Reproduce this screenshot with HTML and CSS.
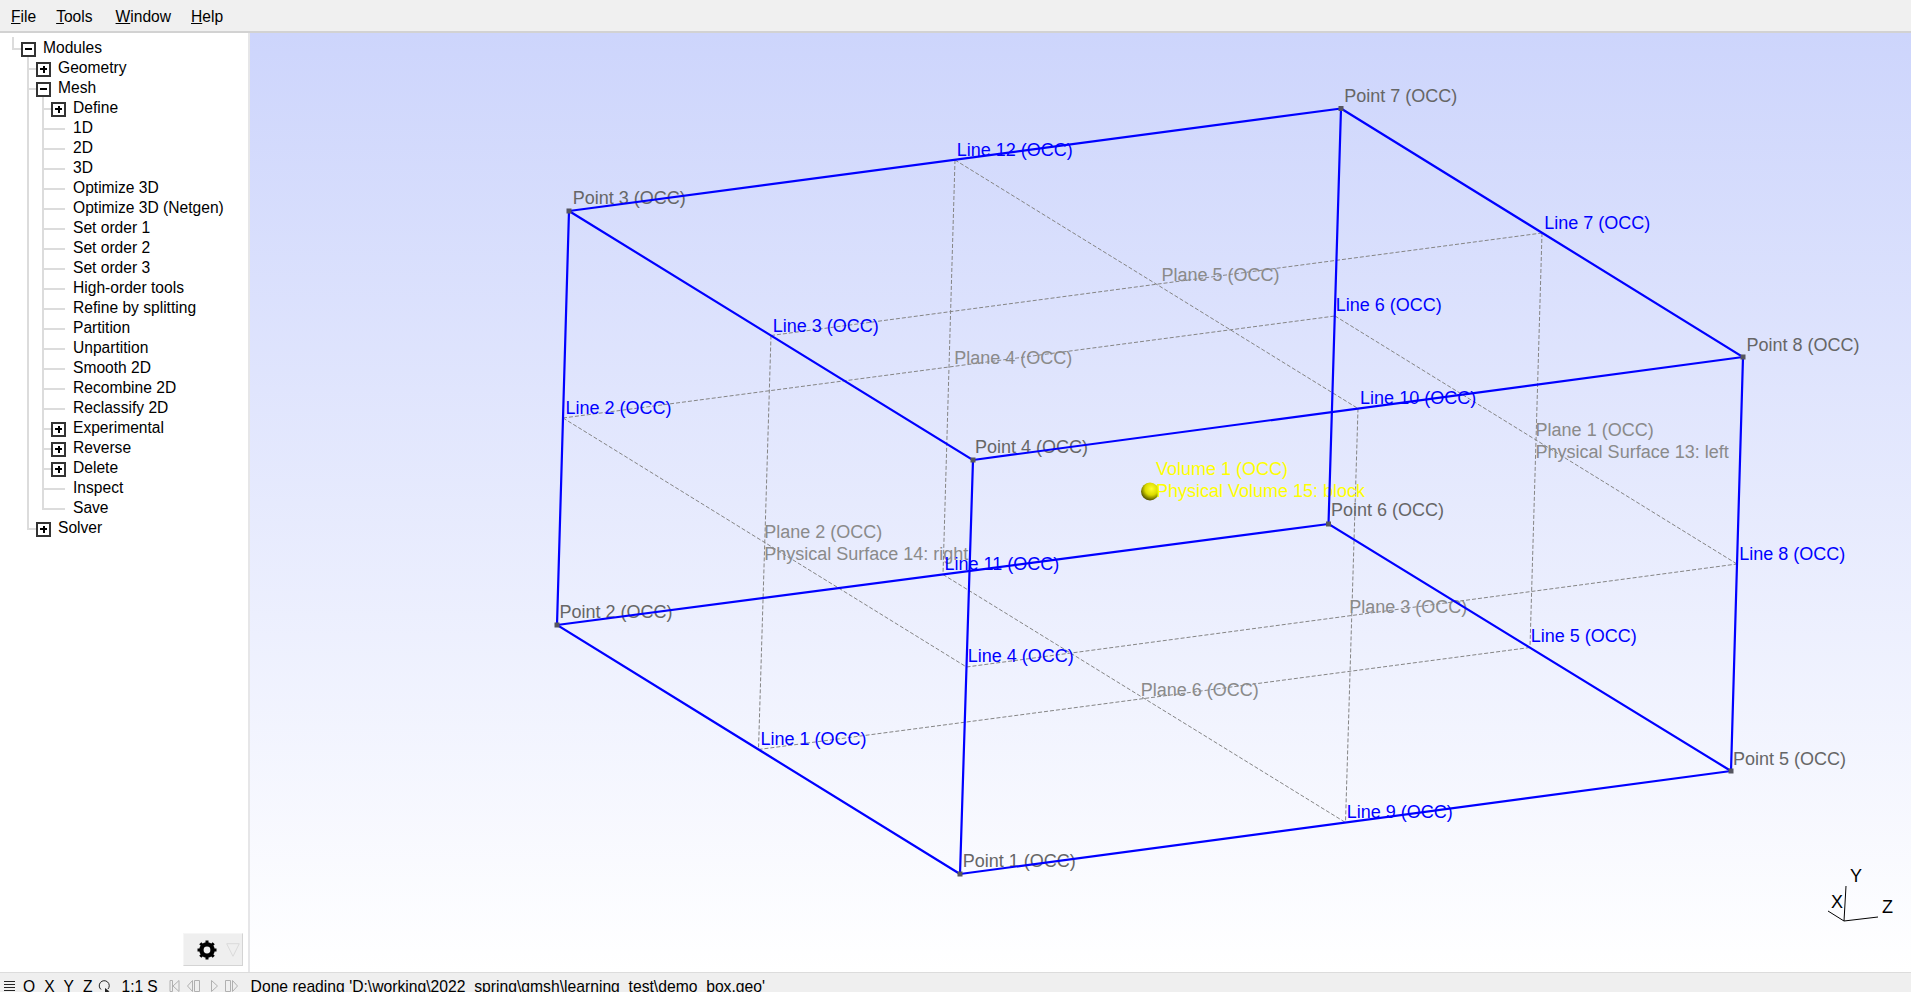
FILE: index.html
```html
<!DOCTYPE html>
<html lang="en">
<head>
<meta charset="utf-8">
<title>Gmsh</title>
<link rel="stylesheet" href="styles.css">
</head>
<body>
<header class="menubar">
  <span class="menu m-file"><u>F</u>ile</span>
  <span class="menu m-tools"><u>T</u>ools</span>
  <span class="menu m-window"><u>W</u>indow</span>
  <span class="menu m-help"><u>H</u>elp</span>
</header>
<div class="main">
  <aside class="sidebar">
    <ul class="tree root">
      <li><div class="row"><span class="box minus"></span><span>Modules</span></div>
        <ul class="tree">
          <li><div class="row"><span class="box plus"></span><span>Geometry</span></div></li>
          <li><div class="row"><span class="box minus"></span><span>Mesh</span></div>
            <ul class="tree">
              <li><div class="row"><span class="box plus"></span><span>Define</span></div></li>
              <li class="leaf"><div class="row">1D</div></li>
              <li class="leaf"><div class="row">2D</div></li>
              <li class="leaf"><div class="row">3D</div></li>
              <li class="leaf"><div class="row">Optimize 3D</div></li>
              <li class="leaf"><div class="row">Optimize 3D (Netgen)</div></li>
              <li class="leaf"><div class="row">Set order 1</div></li>
              <li class="leaf"><div class="row">Set order 2</div></li>
              <li class="leaf"><div class="row">Set order 3</div></li>
              <li class="leaf"><div class="row">High-order tools</div></li>
              <li class="leaf"><div class="row">Refine by splitting</div></li>
              <li class="leaf"><div class="row">Partition</div></li>
              <li class="leaf"><div class="row">Unpartition</div></li>
              <li class="leaf"><div class="row">Smooth 2D</div></li>
              <li class="leaf"><div class="row">Recombine 2D</div></li>
              <li class="leaf"><div class="row">Reclassify 2D</div></li>
              <li><div class="row"><span class="box plus"></span><span>Experimental</span></div></li>
              <li><div class="row"><span class="box plus"></span><span>Reverse</span></div></li>
              <li><div class="row"><span class="box plus"></span><span>Delete</span></div></li>
              <li class="leaf"><div class="row">Inspect</div></li>
              <li class="leaf"><div class="row">Save</div></li>
            </ul>
          </li>
          <li><div class="row"><span class="box plus"></span><span>Solver</span></div></li>
        </ul>
      </li>
    </ul>
    <div class="gearbtn">
      <svg class="gear" viewBox="0 0 20 20" width="20" height="20">
        <circle class="gear-ring" cx="10" cy="10" r="5.6"/>
        <path class="gear-teeth" d="M10 0.5V19.5M0.5 10H19.5M3.3 3.3L16.7 16.7M16.7 3.3L3.3 16.7"/>
        <circle class="gear-hole" cx="10" cy="10" r="3.4"/>
      </svg>
      <svg class="gear-arrow" viewBox="0 0 14 14" width="14" height="14"><path d="M0.7 0.7H13.3L7 13.3Z"/></svg>
    </div>
  </aside>
  <section class="canvas">
    <svg class="scene" viewBox="250 33 1661 939" preserveAspectRatio="none">
      <g class="dash">
        <path d="M771 335.5L1542 233"/>
        <path d="M955 160L1358 408.5"/>
        <path d="M563 418L1335 316"/>
        <path d="M955 160L943 574.5"/>
        <path d="M771 335.5L758.5 749.5"/>
        <path d="M563 418L966.5 667"/>
        <path d="M1335 316L1737 564"/>
        <path d="M1542 233L1530 647.5"/>
        <path d="M1358 408.5L1345.5 822.5"/>
        <path d="M966.5 667L1737 564"/>
        <path d="M758.5 749.5L1530 647.5"/>
        <path d="M943 574.5L1345.5 822.5"/>
      </g>
      <defs>
        <radialGradient id="ball" cx="0.58" cy="0.35" r="0.7">
          <stop offset="0" stop-color="#ffff30"/>
          <stop offset="0.5" stop-color="#dcdc00"/>
          <stop offset="1" stop-color="#3a3a00"/>
        </radialGradient>
      </defs>
      <circle cx="1150" cy="491.5" r="9" fill="url(#ball)"/>
      <g class="lbl-plane">
        <text x="1161.5" y="281">Plane 5 (OCC)</text>
        <text x="954.3" y="364">Plane 4 (OCC)</text>
        <text x="1535.6" y="436">Plane 1 (OCC)</text>
        <text x="1535.6" y="458">Physical Surface 13: left</text>
        <text x="764.2" y="538">Plane 2 (OCC)</text>
        <text x="764.2" y="560">Physical Surface 14: right</text>
        <text x="1349.2" y="613">Plane 3 (OCC)</text>
        <text x="1140.8" y="696">Plane 6 (OCC)</text>
      </g>
      <g class="lbl-point">
        <text x="1344.3" y="102">Point 7 (OCC)</text>
        <text x="572.8" y="203.5">Point 3 (OCC)</text>
        <text x="1746.5" y="350.7">Point 8 (OCC)</text>
        <text x="975" y="453">Point 4 (OCC)</text>
        <text x="1330.9" y="516.4">Point 6 (OCC)</text>
        <text x="559.4" y="618">Point 2 (OCC)</text>
        <text x="1733" y="765">Point 5 (OCC)</text>
        <text x="962.8" y="867.4">Point 1 (OCC)</text>
      </g>
      <g class="lbl-volume">
        <text x="1156" y="475">Volume 1 (OCC)</text>
        <text x="1156" y="497">Physical Volume 15: block</text>
      </g>
      <g class="lbl-line">
        <text x="956.7" y="155.7">Line 12 (OCC)</text>
        <text x="1544.2" y="228.8">Line 7 (OCC)</text>
        <text x="1335.8" y="310.7">Line 6 (OCC)</text>
        <text x="772.7" y="332.4">Line 3 (OCC)</text>
        <text x="1360.1" y="404.3">Line 10 (OCC)</text>
        <text x="565.5" y="414.1">Line 2 (OCC)</text>
        <text x="1739.2" y="560.3">Line 8 (OCC)</text>
        <text x="944.5" y="570">Line 11 (OCC)</text>
        <text x="1530.8" y="642.2">Line 5 (OCC)</text>
        <text x="967.7" y="661.7">Line 4 (OCC)</text>
        <text x="760.5" y="744.6">Line 1 (OCC)</text>
        <text x="1346.7" y="817.7">Line 9 (OCC)</text>
      </g>
      <g class="edge">
        <path d="M960 874L557 625L569 211L973 460Z"/>
        <path d="M1731 771L1328.5 524L1341 108.5L1743 357Z"/>
        <path d="M960 874L1731 771"/>
        <path d="M557 625L1328.5 524"/>
        <path d="M569 211L1341 108.5"/>
        <path d="M973 460L1743 357"/>
      </g>
      <g class="vertex">
        <rect x="957.500" y="871.500" width="5" height="5"/>
        <rect x="554.500" y="622.500" width="5" height="5"/>
        <rect x="566.500" y="208.500" width="5" height="5"/>
        <rect x="970.500" y="457.500" width="5" height="5"/>
        <rect x="1728.500" y="768.500" width="5" height="5"/>
        <rect x="1326" y="521.500" width="5" height="5"/>
        <rect x="1338.500" y="106" width="5" height="5"/>
        <rect x="1740.500" y="354.500" width="5" height="5"/>
      </g>
      <path class="axis" d="M1846 886L1844 921M1844 921L1828 911M1844 921L1878 917"/>
      <g class="lbl-axis">
        <text x="1850" y="882">Y</text>
        <text x="1831" y="908">X</text>
        <text x="1882" y="913">Z</text>
      </g>
    </svg>
  </section>
</div>
<footer class="status">
  <svg class="ic ic-menu" viewBox="0 0 11 12" width="11" height="12"><path d="M0 1.5H11M0 4.5H11M0 7.5H11M0 10.5H11"/></svg>
  <span class="st st-o">O</span>
  <span class="st st-x">X</span>
  <span class="st st-y">Y</span>
  <span class="st st-z">Z</span>
  <svg class="ic ic-rot" viewBox="0 0 13 14" width="13" height="14"><path d="M3 9.5A5 5 0 1 1 10 9"/><path class="solid" d="M7 8L11.500 11.500L7 13Z"/></svg>
  <span class="st st-one">1:1</span>
  <span class="st st-s">S</span>
  <svg class="ic ic-g i-first" viewBox="0 0 11 12" width="11" height="12"><path d="M1 .5H3.500V11.500H1ZM10 .5V11.500L4 6Z"/></svg>
  <svg class="ic ic-g i-prev" viewBox="0 0 13 12" width="13" height="12"><path d="M5.500 .5V11.500L.5 6ZM7.500 .5H12.500V11.500H7.500Z"/></svg>
  <svg class="ic ic-g i-play" viewBox="0 0 7 12" width="7" height="12"><path d="M.5 .5L6.500 6L.5 11.500Z"/></svg>
  <svg class="ic ic-g i-next" viewBox="0 0 13 12" width="13" height="12"><path d="M.5 .5H5.500V11.500H.5ZM7.500 .5V11.500L12.500 6Z"/></svg>
  <span class="st st-msg">Done reading 'D:\working\2022_spring\gmsh\learning_test\demo_box.geo'</span>
</footer>
</body>
</html>
```
FILE: styles.css
```css
* { box-sizing: border-box; }
html, body { margin: 0; height: 992px; overflow: hidden; }
body {
  display: flex;
  flex-direction: column;
  width: 1911px;
  font-family: "Liberation Sans", Arial, sans-serif;
  font-size: 15.6px;
  color: #000;
  background: #fff;
}

/* menu bar */
.menubar {
  flex: 0 0 33px;
  display: flex;
  align-items: center;
  padding: 3px 0 0 11px;
  background: #f0f0f0;
  border-bottom: 2px solid #d2d2d2;
  line-height: 28px;
}
.menu u { text-underline-offset: 1px; }
.m-tools { margin-left: 20px; }
.m-window { margin-left: 23px; }
.m-help { margin-left: 20px; }

/* main */
.main { flex: 1 1 auto; display: flex; min-height: 0; }
.sidebar {
  flex: 0 0 250px;
  display: flex;
  flex-direction: column;
  border-right: 2px solid #e6e6e8;
  padding-top: 4px;
}
.tree { list-style: none; margin: 0; padding: 0 0 0 15px; }
.tree.root { padding-left: 12px; }
.tree li {
  background:
    linear-gradient(#dcdcdc, #dcdcdc) 0 0 / 2px 100% no-repeat,
    linear-gradient(#dcdcdc, #dcdcdc) 0 11px / 22px 2px no-repeat;
}
.tree li:last-child {
  background:
    linear-gradient(#dcdcdc, #dcdcdc) 0 0 / 2px 13px no-repeat,
    linear-gradient(#dcdcdc, #dcdcdc) 0 11px / 22px 2px no-repeat;
}
.tree li.leaf { background-size: 2px 100%, 23px 2px; }
.tree li.leaf:last-child { background-size: 2px 13px, 23px 2px; }
.root > li { background-size: 2px 13px, 10px 2px !important; }
.row {
  height: 20px;
  line-height: 19px;
  display: flex;
  align-items: center;
  gap: 7px;
  padding-left: 9px;
  white-space: nowrap;
}
.leaf > .row { padding-left: 31px; }
.box {
  flex: 0 0 15px;
  height: 15px;
  margin-top: 4px;
  border: 2px solid #333;
  background-color: #fff;
  background-repeat: no-repeat;
  background-position: center;
}
.minus { background-image: linear-gradient(#000, #000); background-size: 7px 2px; }
.plus {
  background-image: linear-gradient(#000, #000), linear-gradient(#000, #000);
  background-size: 7px 2px, 2px 7px;
}

/* gear button */
.gearbtn {
  margin-top: auto;
  margin-bottom: 6px;
  align-self: flex-end;
  margin-right: 5px;
  width: 60px;
  height: 33px;
  display: flex;
  align-items: center;
  padding-left: 13px;
  gap: 9px;
  background: #efefef;
  border-right: 1px solid #d4d4d4;
  border-bottom: 1px solid #d4d4d4;
  border-top: 1px solid #f6f6f6;
  border-left: 1px solid #f6f6f6;
}
.gear-ring { fill: none; stroke: #000; stroke-width: 4.4; }
.gear-teeth { stroke: #000; stroke-width: 3; fill: none; }
.gear-hole { fill: #efefef; }
.gear-arrow path { fill: none; stroke: #dadada; stroke-width: 1; }

/* canvas */
.canvas {
  flex: 1 1 auto;
  min-width: 0;
  background: linear-gradient(#cdd5fc, #ffffff);
}
.scene { display: block; width: 100%; height: 100%; font-family: "Liberation Sans", Arial, sans-serif; font-size: 18px; }
.dash path { fill: none; stroke: #858585; stroke-width: 1; stroke-dasharray: 4 2; }
.edge path { fill: none; stroke: #0000ff; stroke-width: 2.2; }
.vertex rect { fill: #55555f; }
.lbl-plane text { fill: #8a8a8a; }
.lbl-point text { fill: #666; }
.lbl-line text { fill: #0000ff; }
.lbl-volume text { fill: #ffff00; }
.lbl-axis text { fill: #000; font-size: 18px; }
.axis { fill: none; stroke: #000; stroke-width: 1; }

/* status bar */
.status {
  flex: 0 0 20px;
  display: flex;
  align-items: flex-start;
  overflow: hidden;
  background: #efefef;
  border-top: 1px solid #dcdcdc;
  padding: 5px 0 0 4px;
  white-space: nowrap;
  line-height: 18px;
}
.ic { flex: none; margin-top: 2px; }
.ic path { fill: none; stroke: #222; stroke-width: 1; }
.ic-g path { stroke: #b0b0b0; }
.ic-rot path.solid { fill: #222; stroke: none; }
.st { flex: none; }
.st-o { margin-left: 8px; }
.st-x { margin-left: 9px; }
.st-y { margin-left: 9px; }
.st-z { margin-left: 9px; }
.ic-rot { margin-left: 6px; }
.st-one { margin-left: 10px; }
.st-s { margin-left: 4px; }
.i-first { margin-left: 11px; }
.i-prev { margin-left: 7px; }
.i-play { margin-left: 11px; }
.i-next { margin-left: 7px; }
.st-msg { margin-left: 13px; font-size: 15.7px; }
```
